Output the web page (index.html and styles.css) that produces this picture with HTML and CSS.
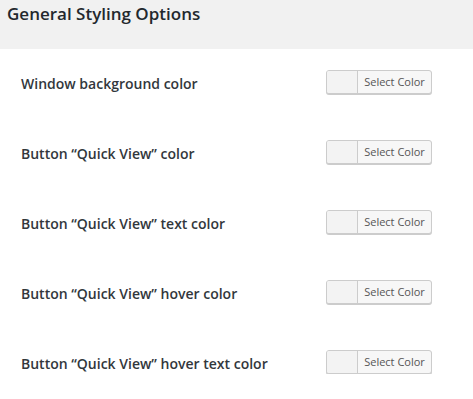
FILE: index.html
```html
<!DOCTYPE html>
<html>
<head>
  <meta charset="utf-8">
  <title>General Styling Options</title>
  <link rel="stylesheet" href="styles.css">
</head>
<body>
  <div class="section-head">
    <h2>General Styling Options</h2>
  </div>

  <div class="options">
    <div class="option-row">
      <span class="option-label">Window background color</span>
      <button class="color-btn"><span class="swatch"></span><span class="btn-text">Select Color</span></button>
    </div>
    <div class="option-row">
      <span class="option-label">Button “Quick View” color</span>
      <button class="color-btn"><span class="swatch"></span><span class="btn-text">Select Color</span></button>
    </div>
    <div class="option-row">
      <span class="option-label">Button “Quick View” text color</span>
      <button class="color-btn"><span class="swatch"></span><span class="btn-text">Select Color</span></button>
    </div>
    <div class="option-row">
      <span class="option-label">Button “Quick View” hover color</span>
      <button class="color-btn"><span class="swatch"></span><span class="btn-text">Select Color</span></button>
    </div>
    <div class="option-row">
      <span class="option-label">Button “Quick View” hover text color</span>
      <button class="color-btn"><span class="swatch"></span><span class="btn-text">Select Color</span></button>
    </div>
  </div>
</body>
</html>
```

FILE: styles.css
```css
body {
  margin: 0;
  background: #fff;
  font-family: "Open Sans", "Liberation Sans", sans-serif;
  color: #23282d;
}

.section-head {
  background: #f1f1f1;
  height: 49px;
  padding: 0 7px;
}

.section-head h2 {
  margin: 0;
  font-size: 17px;
  font-weight: 600;
  line-height: 28px;
}

.options {
  padding: 21px 0 0 21px;
}

.option-row {
  display: flex;
  align-items: center;
  height: 24px;
  margin-bottom: 46px;
}

.option-row:last-child {
  margin-bottom: 0;
}

.option-label {
  width: 305px;
  font-size: 14px;
  font-weight: 600;
  color: #32373c;
  padding-top: 3px;
}

.color-btn {
  display: flex;
  align-items: stretch;
  height: 24px;
  width: 106px;
  padding: 0;
  border: 1px solid #ccc;
  border-radius: 3px;
  background: #f7f7f7;
  box-shadow: 0 1px 0 #ccc;
  font-family: "Open Sans", "Liberation Sans", sans-serif;
  overflow: hidden;
}

.swatch {
  width: 30px;
  background: #f3f3f3;
  border-right: 1px solid #ccc;
}

.btn-text {
  flex: 1;
  font-size: 11px;
  line-height: 22px;
  color: #555;
  text-align: center;
}
```
